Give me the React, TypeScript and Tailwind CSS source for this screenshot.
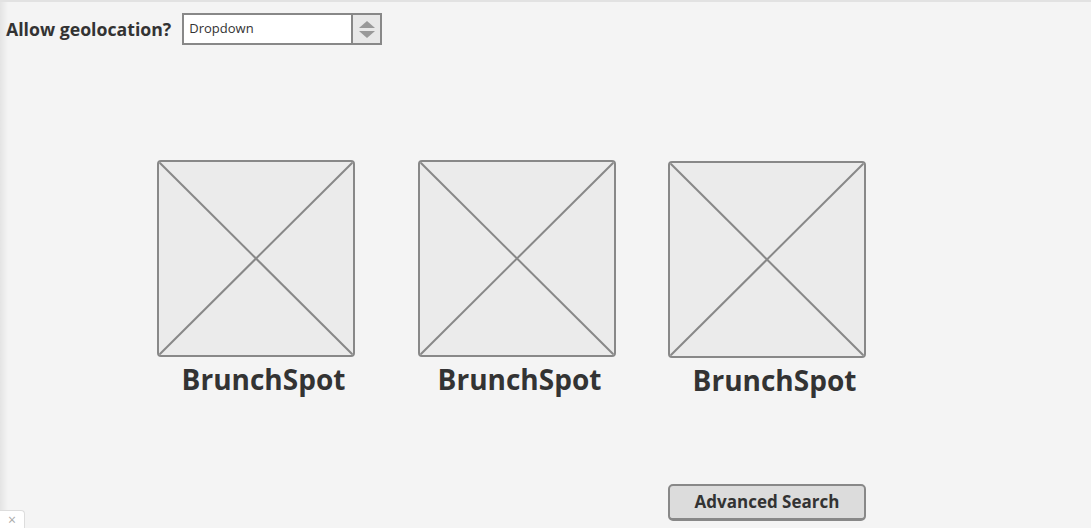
import React from "react";

const font = { fontFamily: '"Open Sans", "Liberation Sans", sans-serif' };

const Placeholder = () => (
  <div className="h-[197px] w-[198px] overflow-hidden rounded-[4px] border-2 border-[#888] bg-[#ebebeb]">
    <svg width="100%" height="100%" viewBox="0 0 194 193" preserveAspectRatio="none">
      <line x1="0" y1="0" x2="194" y2="193" stroke="#888" strokeWidth="2" />
      <line x1="194" y1="0" x2="0" y2="193" stroke="#888" strokeWidth="2" />
    </svg>
  </div>
);

const Spot = ({ className = "", labelPad = "pl-[15px]" }: { className?: string; labelPad?: string }) => (
  <div className={`flex w-[198px] flex-col ${className}`}>
    <Placeholder />
    <div className={`${labelPad} text-center text-[28px] leading-[45px] font-bold text-[#333]`}>
      BrunchSpot
    </div>
  </div>
);

const App = () => {
  return (
    <div
      className="relative h-[528px] w-[1091px] overflow-hidden border-t-2 border-[#e2e2e2] bg-[#f4f4f4]"
      style={font}
    >
      <div className="pointer-events-none absolute inset-y-0 left-0 w-[8px] bg-gradient-to-r from-[#e4e4e4] to-transparent" />

      <div className="flex items-center pt-[11px] pl-[6px]">
        <span className="text-[17.7px] font-bold text-[#333]">Allow geolocation?</span>
        <div className="ml-[11px] flex h-[32px] w-[200px] border-2 border-[#888] bg-white">
          <div className="flex flex-1 items-center pl-[5px] text-[13px] text-[#333]">Dropdown</div>
          <div className="flex w-[29px] flex-col items-center justify-center gap-[3px] border-l-2 border-[#888] bg-[#e8e8e8]">
            <div className="h-0 w-0 border-x-[8px] border-b-[7px] border-x-transparent border-b-[#999]" />
            <div className="h-0 w-0 border-x-[8px] border-t-[7px] border-x-transparent border-t-[#999]" />
          </div>
        </div>
      </div>

      <div className="mt-[115px] flex items-start">
        <Spot className="ml-[157px]" />
        <Spot className="ml-[63px]" labelPad="pl-[5px]" />
        <Spot className="ml-[52px] mt-[1px]" />
      </div>

      <div className="mt-[81px] ml-[668px]">
        <button className="h-[37px] w-[198px] rounded-[5px] border-2 border-b-[3px] border-[#888] bg-[#dcdcdc] text-[17px] font-bold text-[#333]">
          Advanced Search
        </button>
      </div>

      <div className="absolute bottom-0 left-0 flex h-[18px] w-[25px] items-center justify-center rounded-tr-[4px] border-t border-r border-[#ddd] bg-white text-[14px] leading-none text-[#aaa]">
        ×
      </div>
    </div>
  );
};

export default App;
